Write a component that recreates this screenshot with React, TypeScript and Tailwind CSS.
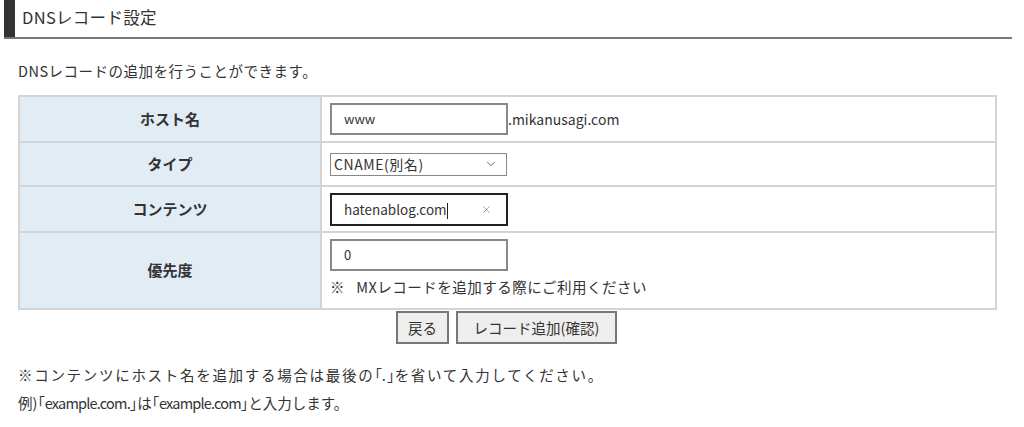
import { ChevronDown, X } from 'lucide-react';

const font = { fontFamily: '"Noto Sans CJK JP", "Noto Sans", sans-serif' };

// narrow bracket glyphs like the proportional font in the original page
const B = ({ c }: { c: string }) => <span className="[font-feature-settings:'palt'] tracking-normal">{c}</span>;

export default function App() {
  return (
    <div className="w-[1024px] h-[427px] bg-white text-[#333] overflow-hidden" style={font}>
      {/* Heading */}
      <div className="ml-[4px] mr-[12px] h-[39px] flex border-b-2 border-[#777]">
        <div className="w-[11px] bg-[#333]" />
        <h1 className="pl-[7px] pt-[5px] text-[16.5px] leading-[24px] tracking-[0.3px]">DNSレコード設定</h1>
      </div>

      <p className="ml-[18px] mt-[21px] text-[14.5px] leading-[22px] tracking-[0.5px]">DNSレコードの追加を行うことができます。</p>

      {/* Form table */}
      <table className="ml-[18px] mt-[13px] w-[979px] border-collapse border-2 border-[#d4d4d4] text-[14px]">
        <tbody>
          <tr className="h-[46px]">
            <th className="w-[302px] bg-[#e2ecf5] border-2 border-[#d4d4d4] font-semibold text-[15px] text-[#333]">ホスト名</th>
            <td className="border-2 border-[#d4d4d4] pl-[8px]">
              <div className="flex items-center">
                <div className="w-[178px] h-[32px] border-2 border-[#888] flex items-center pl-[12px] text-[13px]">www</div>
                <span className="text-[14px]">.mikanusagi.com</span>
              </div>
            </td>
          </tr>
          <tr className="h-[44px]">
            <th className="bg-[#e2ecf5] border-2 border-[#d4d4d4] font-semibold text-[15px]">タイプ</th>
            <td className="border-2 border-[#d4d4d4] pl-[8px]">
              <div className="w-[177px] h-[23px] border border-[#888] flex items-center justify-between pl-[3px] pr-[8px] text-[14px] tracking-[0.04em]">
                <span>CNAME(別名)</span>
                <ChevronDown className="w-[14px] h-[14px] text-[#555]" strokeWidth={1.5} />
              </div>
            </td>
          </tr>
          <tr className="h-[46px]">
            <th className="bg-[#e2ecf5] border-2 border-[#d4d4d4] font-semibold text-[15px]">コンテンツ</th>
            <td className="border-2 border-[#d4d4d4] pl-[8px]">
              <div className="w-[178px] h-[33px] border-2 border-[#222] flex items-center justify-between pl-[12px] pr-[14px] text-[13.5px]">
                <span>
                  hatenablog.com<span className="inline-block w-px h-[16px] bg-[#222] align-middle" />
                </span>
                <X className="w-[11px] h-[11px] text-[#777]" strokeWidth={1.5} />
              </div>
            </td>
          </tr>
          <tr className="h-[77px]">
            <th className="bg-[#e2ecf5] border-2 border-[#d4d4d4] font-semibold text-[15px]">優先度</th>
            <td className="border-2 border-[#d4d4d4] pl-[8px] align-top pt-[6px]">
              <div className="w-[178px] h-[32px] border-2 border-[#888] flex items-center pl-[12px] text-[13px]">0</div>
              <p className="mt-[5px] text-[14.5px] leading-[22px] tracking-[0.5px]">※&nbsp;&nbsp;&nbsp;MXレコードを追加する際にご利用ください</p>
            </td>
          </tr>
        </tbody>
      </table>

      {/* Buttons */}
      <div className="flex justify-center gap-[7px] mt-[1px] ml-[18px] w-[979px] pr-[2px]">
        <button className="w-[53px] h-[33px] border-2 border-[#777] bg-[#eee] text-[14.5px]">戻る</button>
        <button className="w-[161px] h-[33px] border-2 border-[#777] bg-[#eee] text-[14.5px]">レコード追加(確認)</button>
      </div>

      {/* Notes */}
      <div className="ml-[18px] mt-[17px] text-[14.5px] leading-[28px]">
        <p className="tracking-[1.7px]">
          ※コンテンツにホスト名を追加する場合は最後の<B c="「" />.<B c="」" />を省いて入力してください。
        </p>
        <p>
          例)<B c="「" /><span className="tracking-[-0.8px]">example.com.</span><B c="」" />は<B c="「" />
          <span className="tracking-[-0.8px]">example.com</span><B c="」" />と入力します。
        </p>
      </div>
    </div>
  );
}
